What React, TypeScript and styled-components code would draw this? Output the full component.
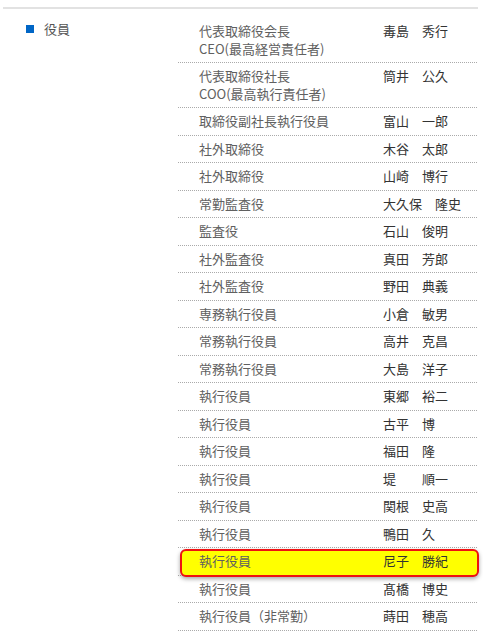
import React from 'react';
import styled, { createGlobalStyle } from 'styled-components';

const Global = createGlobalStyle`
    body {
        margin: 0;
        background: #fff;
        font-family: "Noto Sans CJK JP", "Noto Sans", sans-serif;
    }
`

const Page = styled.div`
    padding: 7px 5px 0 3px;
`

const Section = styled.div`
    display: flex;
    border-top: 2px solid #e2e2e2;
    padding-top: 9px;
`

const Label = styled.div`
    width: 175px;
    flex-shrink: 0;
    display: flex;
    align-items: flex-start;
    gap: 10px;
    padding: 2px 0 0 23px;
    box-sizing: border-box;
    font-size: 13px;
    line-height: 17.5px;
    color: #555;

    &::before{
        content: "";
        width: 8px;
        height: 8px;
        margin-top: 5px;
        background: #0066c6;
    }
`

const Table = styled.div`
    flex: 1;
    margin-right: 1px;
`

const Row = styled.div<{ $mark?: boolean }>`
    position: relative;
    display: grid;
    grid-template-columns: 205px 1fr;
    padding: 4px 0 5px 0;
    border-bottom: 1px dotted #aaa;
    font-size: 13px;
    line-height: 17.5px;

    &::before{
        content: "";
        display: ${p => (p.$mark ? 'block' : 'none')};
        position: absolute;
        left: 2px;
        right: -2px;
        top: 1px;
        bottom: -2px;
        background: #ffff00;
        border: 2px solid #ee1111;
        border-radius: 6px;
        box-shadow: 0 2px 4px rgba(0, 0, 0, 0.35);
        box-sizing: border-box;
    }
`

const Role = styled.div`
    position: relative;
    padding-left: 21px;
    color: #606060;
`

const Name = styled.div`
    position: relative;
    color: #333;
    white-space: pre;
`

const members: [string[], string, boolean?][] = [
    [['代表取締役会長', 'CEO(最高経営責任者)'], '毒島　秀行'],
    [['代表取締役社長', 'COO(最高執行責任者)'], '筒井　公久'],
    [['取締役副社長執行役員'], '富山　一郎'],
    [['社外取締役'], '木谷　太郎'],
    [['社外取締役'], '山崎　博行'],
    [['常勤監査役'], '大久保　隆史'],
    [['監査役'], '石山　俊明'],
    [['社外監査役'], '真田　芳郎'],
    [['社外監査役'], '野田　典義'],
    [['専務執行役員'], '小倉　敏男'],
    [['常務執行役員'], '高井　克昌'],
    [['常務執行役員'], '大島　洋子'],
    [['執行役員'], '東郷　裕二'],
    [['執行役員'], '古平　博'],
    [['執行役員'], '福田　隆'],
    [['執行役員'], '堤　　順一'],
    [['執行役員'], '関根　史高'],
    [['執行役員'], '鴨田　久'],
    [['執行役員'], '尼子　勝紀', true],
    [['執行役員'], '髙橋　博史'],
    [['執行役員（非常勤）'], '蒔田　穂高'],
];

function App() {
    return (
        <Page>
            <Global />
            <Section>
                <Label>役員</Label>
                <Table>
                    {members.map(([role, name, mark], i) => (
                        <Row key={i} $mark={mark}>
                            <Role>
                                {role.map((line, j) => (
                                    <div key={j}>{line}</div>
                                ))}
                            </Role>
                            <Name>{name}</Name>
                        </Row>
                    ))}
                </Table>
            </Section>
        </Page>
    )
}

export default App
